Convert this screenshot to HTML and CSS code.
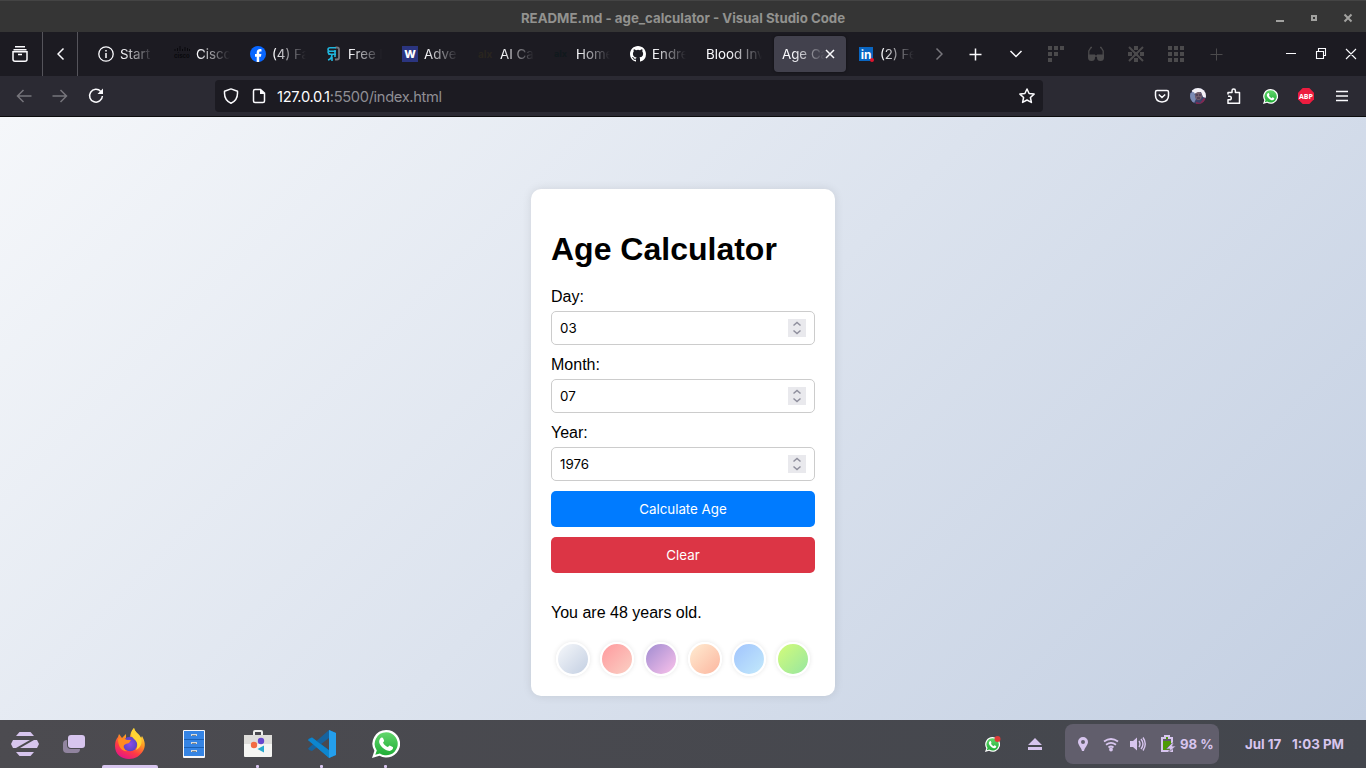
FILE: index.html
```html
<!DOCTYPE html>
<html lang="en">
<head>
<meta charset="utf-8">
<title>Age Calculator</title>
<link rel="stylesheet" href="styles.css">
</head>
<body>
<div class="desktop">
  <header class="titlebar">
    <div class="titlebar-text">README.md - age_calculator - Visual Studio Code</div>
    <svg class="titlebar-controls" width="102" height="32" viewBox="0 0 102 32">
      <path d="M12 20h8v2h-8z" fill="#a2a2a0"/>
      <path d="M48 16h4v4h-4z" fill="none" stroke="#a2a2a0" stroke-width="2"/>
      <path d="M80.500 14.500l7 7M87.500 14.500l-7 7" stroke="#a2a2a0" stroke-width="2"/>
    </svg>
  </header>

  <nav class="tabbar">
    <div class="tab-tool recent">
      <svg width="16" height="16" viewBox="0 0 16 16" class="line"><path d="M3 .8h10M1.500 3.700h13M1 5.700h14v7.500q0 2-2 2H3q-2 0-2-2zM6 8.500h4"/></svg>
    </div>
    <div class="tab-tool scroll-left">
      <svg width="8" height="14" viewBox="0 0 8 14" class="line"><path d="M6.500 1.500L1 7l5.500 5.500"/></svg>
    </div>
    <div class="tabs">
      <div class="tab"><svg class="fav" viewBox="0 0 16 16"><circle cx="8" cy="8" r="7.200" fill="none" stroke="#fbfbfe" stroke-width="1.300"/><path d="M8 7v5M8 4v1.500" stroke="#fbfbfe" stroke-width="1.500"/></svg><span class="tab-label">Start</span></div>
      <div class="tab"><svg class="fav" viewBox="0 0 16 16"><path d="M1 3v2M3.500 2v3M6 0v5M8.500 3v2M11 1v4M13.500 2v3M15.500 3v2" stroke="#09090c"/><text x="0" y="12" class="cisco">cisco</text></svg><span class="tab-label">Cisco</span></div>
      <div class="tab"><svg class="fav" viewBox="0 0 16 16"><circle cx="8" cy="8" r="8" fill="#0866ff"/><path d="M6.700 16v-5.200H5V8h1.700V6.800c0-2.500 1.300-3.700 3.600-3.700l1.200.1v2.300h-1c-1 0-1.300.5-1.300 1.200V8h2.200l-.5 2.800H9.200V16z" fill="#fff"/></svg><span class="tab-label">(4) Fa</span></div>
      <div class="tab"><svg class="fav" viewBox="0 0 16 16"><path d="M9.500 1.500H11q2 0 2 2v8q0 2-2 2H9" fill="none" stroke="#77747a" stroke-width="1.800"/><path d="M10 1.800H4q-2 0-2 1.700t2 1.700h6M2 5.200q0 3 3 3h5M9 4v7M6 8q0 5-4 6M6 11v4M3 8v1" fill="none" stroke="#20b5dc" stroke-width="1.600"/></svg><span class="tab-label">Free D</span></div>
      <div class="tab"><svg class="fav" viewBox="0 0 16 16"><path d="M0 0h16v16H0z" fill="#2b3580"/><text x="8" y="12" class="w-mark">W</text></svg><span class="tab-label">Adve</span></div>
      <div class="tab"><svg class="fav" viewBox="0 0 16 16"><text x="0" y="12" class="alx brown">alx</text></svg><span class="tab-label">AI Ca</span></div>
      <div class="tab"><svg class="fav" viewBox="0 0 16 16"><text x="0" y="11" class="alx small">alx</text></svg><span class="tab-label">Home</span></div>
      <div class="tab"><svg class="fav" viewBox="0 0 16 16"><path fill="#fff" d="M8 0C3.580 0 0 3.580 0 8c0 3.540 2.290 6.530 5.470 7.590.4.070.55-.17.55-.38 0-.19-.01-.82-.01-1.490-2.010.37-2.530-.49-2.690-.94-.09-.23-.48-.94-.82-1.130-.28-.15-.68-.52-.01-.53.63-.01 1.080.58 1.230.82.72 1.210 1.870.87 2.330.66.07-.52.28-.87.51-1.070-1.780-.2-3.640-.89-3.640-3.950 0-.87.31-1.590.82-2.150-.08-.2-.36-1.020.08-2.120 0 0 .67-.21 2.200.82a7.700 7.700 0 0 1 4 0c1.530-1.040 2.200-.82 2.200-.82.44 1.100.16 1.920.08 2.120.51.56.82 1.270.82 2.150 0 3.070-1.870 3.750-3.650 3.950.29.25.54.73.54 1.480 0 1.070-.01 1.930-.01 2.200 0 .21.15.46.55.38A8.010 8.010 0 0 0 16 8c0-4.420-3.580-8-8-8z"/></svg><span class="tab-label">Endre</span></div>
      <div class="tab"><span class="tab-label">Blood Inv</span></div>
      <div class="tab active"><span class="tab-label">Age Ca</span><svg class="tab-close line" width="10" height="10" viewBox="0 0 10 10"><path d="M1 1l8 8M9 1L1 9"/></svg></div>
      <div class="tab"><svg class="fav" viewBox="0 0 16 16"><path d="M1 1h14v14H1z" fill="#0a66c2"/><text x="8" y="13" class="in-mark">in</text><circle cx="14" cy="14" r="2" fill="#e0132c"/></svg><span class="tab-label">(2) Fe</span></div>
    </div>
    <div class="tab-actions">
      <div class="cell30"><svg width="8" height="14" viewBox="0 0 8 14" class="line faint"><path d="M1.500 1.500L7 7l-5.500 5.500"/></svg></div>
      <div class="cell42"><svg width="13" height="13" viewBox="0 0 13 13" class="line"><path d="M6.500 .5v12M.5 6.500h12"/></svg></div>
      <div class="cell40"><svg width="14" height="8" viewBox="0 0 14 8" class="line"><path d="M1.500 1L7 6.500 12.500 1"/></svg></div>
      <div class="cell40"><svg width="16" height="16" viewBox="0 0 16 16" fill="#4b4a4c"><path d="M0 0h4v4H0zM6 0h4v4H6zM12 0h4v4h-4zM0 6h4v4H0zM6 6h4v4H6zM0 12h4v4H0z"/></svg></div>
      <div class="cell40"><svg width="16" height="16" viewBox="0 0 16 16" fill="#4b4a4c"><path d="M4 1.500H3L.8 5v6M12 1.500h1L15.200 5v6M6 10h4" fill="none" stroke="#4b4a4c" stroke-width="1.300"/><path d="M0 8.500h7v3q0 3.500-3.500 3.500T0 11.500zM9 8.500h7v3q0 3.500-3.500 3.500T9 11.500z"/></svg></div>
      <div class="cell40"><svg width="16" height="16" viewBox="0 0 16 16" fill="#4b4a4c"><path d="M6 0h4v4H6zM0 6h4v4H0zM6 6h4v4H6zM12 6h4v4h-4zM6 12h4v4H6z"/><path d="M1 1l14 14M15 1L1 15" stroke="#4b4a4c" stroke-width="2"/></svg></div>
      <div class="cell40"><svg width="16" height="16" viewBox="0 0 16 16" fill="#4b4a4c"><path d="M0 0h4v4H0zM6 0h4v4H6zM12 0h4v4h-4zM0 6h4v4H0zM6 6h4v4H6zM12 6h4v4h-4zM0 12h4v4H0zM6 12h4v4H6zM12 12h4v4h-4z"/></svg></div>
      <div class="cell40"><svg width="13" height="13" viewBox="0 0 13 13" stroke="#4b4a4c" fill="none"><path d="M6.500 .5v12M.5 6.500h12"/></svg></div>
    </div>
    <svg class="window-controls" width="90" height="44" viewBox="0 0 90 44" fill="none" stroke="#fbfbfe"><path d="M10 21.500h10M40.500 19.500h7v7h-7zM42.500 19v-2.500h7v7H47.500M70 17l10 10M80 17L70 27" stroke-width="1.100"/></svg>
  </nav>

  <div class="navbar">
    <div class="nav-buttons">
      <svg width="16" height="14" viewBox="0 0 16 14" class="line dim"><path d="M15.500 7H1.500M7.500 1l-6 6 6 6"/></svg>
      <svg width="16" height="14" viewBox="0 0 16 14" class="line dim"><path d="M.5 7h14M8.500 1l6 6-6 6"/></svg>
      <svg width="16" height="16" viewBox="0 0 16 16" class="line"><path d="M12.800 3.500A6.400 6.400 0 1 0 14.400 8"/><path d="M15 .5v5.500H9.500z" fill="#fbfbfe" stroke="none"/></svg>
    </div>
    <div class="urlbar">
      <svg width="16" height="16" viewBox="0 0 16 16" class="line"><path d="M8 .9l6.500 2.400v2C14.500 10 12 13.500 8 15.300 4 13.500 1.500 10 1.500 5.300v-2z" stroke-linejoin="round"/></svg>
      <svg width="14" height="16" viewBox="0 0 14 16" class="line"><path d="M8.500 1.600H3q-1.500 0-1.500 1.500v10q0 1.500 1.500 1.500h8q1.500 0 1.500-1.500V5z"/><path d="M8 1l5 5H8z" fill="#fbfbfe" stroke="none"/></svg>
      <div class="url"><span class="host">127.0.0.1</span>:5500/index.html</div>
      <svg width="16" height="16" viewBox="0 0 16 16" class="line"><path stroke-linejoin="round" d="M8 1l2.100 4.500 5 .6-3.700 3.400 1 4.900L8 12l-4.400 2.400 1-4.900L.9 6.100l5-.6z"/></svg>
    </div>
    <div class="extensions">
      <div><svg width="16" height="14" viewBox="0 0 16 14" class="line"><path d="M3 1.500h10q1.500 0 1.500 1.500v3.500q0 6-6.500 6.500-6.500-.5-6.500-6.500V3Q1.500 1.500 3 1.500zM4.800 5.500L8 8.500l3.200-3"/></svg></div>
      <div><svg width="16" height="16" viewBox="0 0 16 16"><defs><clipPath id="avatar"><circle cx="8" cy="8" r="8"/></clipPath></defs><g clip-path="url(#avatar)"><path d="M0 0h16v16H0z" fill="#3c4169"/><path d="M1 0h15v10l-3-1-2-5-4 1-4 1z" fill="#f3f1f6"/><path d="M0 5l4-1 2 7-2 4-4-2z" fill="#7b8bb4"/><ellipse cx="8.500" cy="8" rx="3.300" ry="4" fill="#75606d"/><path d="M6 14l4 1 4-5 2 2v5H6z" fill="#852850"/><path d="M6 7h2M9 7h2M7 10h3" stroke="#342b48"/></g></svg></div>
      <div><svg width="16" height="16" viewBox="0 0 16 16" class="line"><path stroke-linejoin="round" d="M2 6.500V4.500h4V2.800a1.700 1.700 0 0 1 3.400 0v1.700h4.100v10.800H2v-3.500h1.500a1.800 1.800 0 0 0 0-3.600H2"/></svg></div>
      <div><svg width="15" height="15" viewBox="0 0 28 28"><use href="#whatsapp"/></svg></div>
      <div><svg width="16" height="16" viewBox="0 0 16 16"><path d="M4.700 0h6.600L16 4.700v6.600L11.300 16H4.700L0 11.300V4.700z" fill="#ed1c3f"/><text x="8" y="10.900" class="abp" textLength="14" lengthAdjust="spacingAndGlyphs">ABP</text></svg></div>
      <div><svg width="12" height="12" viewBox="0 0 12 12" class="line"><path d="M0 1.500h12M0 6h12M0 10.500h12"/></svg></div>
    </div>
  </div>

  <main class="page">
    <section class="card">
      <h1>Age Calculator</h1>
      <div class="field"><label>Day:</label><div class="input"><span>03</span><svg class="spin" viewBox="0 0 18 18"><path d="M5.500 6.500L9 3.500l3.500 3M5.500 11.500l3.500 3 3.500-3"/></svg></div></div>
      <div class="field"><label>Month:</label><div class="input"><span>07</span><svg class="spin" viewBox="0 0 18 18"><path d="M5.500 6.500L9 3.500l3.500 3M5.500 11.500l3.500 3 3.500-3"/></svg></div></div>
      <div class="field"><label>Year:</label><div class="input"><span>1976</span><svg class="spin" viewBox="0 0 18 18"><path d="M5.500 6.500L9 3.500l3.500 3M5.500 11.500l3.500 3 3.500-3"/></svg></div></div>
      <button class="btn">Calculate Age</button>
      <button class="btn clear">Clear</button>
      <p class="result">You are 48 years old.</p>
      <div class="palette">
        <span class="swatch mist"></span><span class="swatch coral"></span><span class="swatch violet"></span><span class="swatch peach"></span><span class="swatch sky"></span><span class="swatch lime"></span>
      </div>
    </section>
  </main>

  <footer class="taskbar">
    <div class="launcher start"><svg width="28" height="26" viewBox="0 0 28 26" fill="#d7c5ee"><path d="M5 5l3.500-4h11L23 5zM2 9h17L5 17H2l-2-4zM26 17H9l14-8h3l2 4zM5 21h18l-3.500 4h-11z"/></svg></div>
    <div class="launcher views"><svg width="24" height="20" viewBox="0 0 24 20"><rect x="1" y="6" width="17" height="13" rx="4" fill="#91849f"/><rect x="5" y="0" width="19" height="15" rx="4" fill="#4b4a50"/><rect x="6" y="1" width="17" height="13" rx="3" fill="#d7c5ee"/></svg></div>
    <div class="launcher focused">
      <svg width="32" height="32" viewBox="0 0 32 32"><defs><linearGradient id="fire" x1=".8" y1="0" x2=".3" y2="1"><stop offset="0" stop-color="#fff34a"/><stop offset=".4" stop-color="#ff9a22"/><stop offset=".7" stop-color="#ff3b43"/><stop offset="1" stop-color="#e31587"/></linearGradient><radialGradient id="globe"><stop offset="0" stop-color="#8b4bea"/><stop offset="1" stop-color="#5a45c4"/></radialGradient></defs><path d="M20 0c1 5 5 6 7 10l1-2c3 5 4 10 1 15-3 5-8 8-14 8C7 31 1 26 1 18c0-4 1-7 3-9l1-3 3 4 4-4v4l4 1c0-5 1-8 4-11z" fill="url(#fire)"/><circle cx="16" cy="16" r="7.300" fill="url(#globe)"/><path d="M4 11c3-2 6-1 9 1h4l-2 3c-4 1-6 2-5 5 1 2 2 3 4 3-6 1-10-4-10-12z" fill="#ff8b22"/><path d="M20 0c-3 4-4 7 0 11 4 3 4 7 2 11 6-3 7-9 4-14-2-3-5-4-6-8z" fill="#ffd534"/></svg>
      <span class="indicator"></span>
    </div>
    <div class="launcher"><svg width="22" height="28" viewBox="0 0 22 28"><rect width="22" height="28" rx="1" fill="#f7f7f9"/><path d="M1 1h20v25H1z" fill="#3584e4"/><path d="M1 9.500h20M1 17.500h20" stroke="#1c61b4"/><path d="M8 4h6v2H8zM8 12h6v2H8zM8 20h6v2H8z" fill="#d5d9dc"/><path d="M9 5.500h4M9 13.500h4M9 21.500h4" stroke="#77838c"/></svg></div>
    <div class="launcher"><svg width="28" height="28" viewBox="0 0 28 28"><path d="M10 6V2q0-1 1-1h6q1 0 1 1v4" fill="none" stroke="#eeeeec" stroke-width="2"/><rect y="5" width="28" height="22" rx="1" fill="#f5f5f3"/><path d="M0 5h28v9H0z" fill="#deddda"/><circle cx="17" cy="11" r="3.200" fill="#6747ce"/><circle cx="10" cy="15" r="3.200" fill="#f36c42"/><path d="M13.500 19l6.500-3.500v7z" fill="#28a9ce"/></svg><span class="dot"></span></div>
    <div class="launcher"><svg width="28" height="28" viewBox="0 0 28 28"><path d="M21 0l7 3v22l-7 3V20L4 7.500 1 8.500 0 10l21 17.500V28z" fill="#0877bd"/><path d="M0 18.500L21 0v8L4 21 1 20z" fill="#16639e"/><path d="M21 0l7 3v22l-7 3z" fill="#249fed"/><path d="M4 7.500l17 13V28L0 10z" fill="#0d86cf"/></svg><span class="dot"></span></div>
    <div class="launcher"><svg width="28" height="28" viewBox="0 0 28 28"><defs><linearGradient id="wa-green" x2="0" y2="1"><stop stop-color="#62d66b"/><stop offset="1" stop-color="#20ae37"/></linearGradient><g id="whatsapp"><path d="M14.200 0A13.700 13.700 0 0 0 2.400 20.800L0 28l7.500-2.200A13.800 13.800 0 1 0 14.200 0z" fill="#fff"/><path d="M14.200 2.300A11.500 11.500 0 0 0 4.800 20.400L3.300 24.800l4.600-1.400A11.500 11.500 0 1 0 14.200 2.300z" fill="url(#wa-green)"/><path d="M9.500 7.500c.7-.3 1.300 0 1.600.7l1 2.400c.3.800-1.200 1.800-1 2.200 1 2 2.500 3.400 4.600 4.300.5.200 1.500-1.800 2-1.600l3 1.400c.5.300.3 1.500 0 2.200-.8 1.500-2.800 2.100-4.500 1.700-4.300-1-8.200-4.800-9-8.500-.3-1.800.7-4 2.300-4.800z" fill="#fff"/></g></defs><use href="#whatsapp"/></svg><span class="dot"></span></div>

    <div class="status">
      <svg width="18" height="16" viewBox="0 0 18 16"><svg y="1" width="15" height="15" viewBox="0 0 28 28"><use href="#whatsapp"/></svg><circle cx="12.500" cy="3" r="3" fill="#dc3c38"/></svg>
      <svg class="eject" width="16" height="14" viewBox="0 0 16 14" fill="#d7c5ee"><path d="M8 1l7 7H1zM1 10h14v3H1z"/></svg>
      <div class="tray">
        <svg width="12" height="16" viewBox="0 0 12 16" fill="#d7c5ee"><path fill-rule="evenodd" d="M6 1a5 5 0 0 1 5 5c0 3-3 5-4 9H5C4 11 1 9 1 6a5 5 0 0 1 5-5zm0 3a2 2 0 1 0 0 4 2 2 0 0 0 0-4z"/></svg>
        <svg width="16" height="16" viewBox="0 0 16 16" fill="none" stroke="#d7c5ee" stroke-width="1.800"><path d="M1 5.500q7-5 14 0M3 8.700q5-3.500 10 0"/><path d="M5.500 11.500q2.500-2 5 0"/><circle cx="8" cy="13.500" r="1" fill="#d7c5ee"/></svg>
        <svg width="16" height="16" viewBox="0 0 16 16"><path d="M0 5h3l4-3.500v13L3 11H0z" fill="#d7c5ee"/><path d="M9 5q2 3 0 6M11 3q4 5 0 10M13 1.500q4.500 6.500 0 13" fill="none" stroke="#d7c5ee" stroke-width="1.400"/></svg>
        <svg width="16" height="18" viewBox="0 0 16 18"><path d="M5 3V1h4v2h3v13H2V3z" fill="#4e9a06" stroke="#d7c5ee" stroke-width="2"/><path d="M3 4h8v2H3z" fill="#615c6c"/><path d="M12 8l-6 6h4l-2 4 8-7h-4l2-3z" fill="#d7c5ee" stroke="#615e6c" stroke-width=".7"/></svg>
        <span class="battery">98 %</span>
      </div>
      <div class="clock"><span>Jul 17</span><span>1:03 PM</span></div>
    </div>
  </footer>
</div>
</body>
</html>
```

FILE: styles.css
```css
* { box-sizing: border-box; }
body { margin: 0; overflow: hidden; font-family: Inter, sans-serif; font-size: 13.333px; color: #fbfbfe; }
svg { display: block; flex: none; }
.desktop { width: 1366px; height: 768px; display: flex; flex-direction: column; }
.line { fill: none; stroke: #fbfbfe; stroke-width: 1.5; }
.dim { stroke: #76757c; }
.faint { stroke: #77767c; }

.titlebar { height: 32px; background: #353535; border-top: 1px solid #444; display: grid; grid-template-columns: 102px 1fr 102px; align-items: center; }
.titlebar-text { grid-column: 2; text-align: center; font-size: 13.25px; font-weight: 700; color: #92928f; padding-top: 3px; }
.titlebar-controls { margin-top: -1px; }

.tabbar { height: 44px; background: #1c1b22; display: flex; align-items: center; }
.tab-tool { height: 44px; display: flex; align-items: center; justify-content: center; border-right: 1px solid #55545b; }
.recent { width: 43px; padding-right: 3px; }
.scroll-left { width: 35px; padding-left: 2px; }
.tabs { display: flex; margin-left: 10px; }
.tab { width: 72px; height: 36px; margin: 0 2px; padding: 0 8px; display: flex; align-items: center; gap: 6px; border-radius: 4px; }
.tab.active { background: #42414d; gap: 0; padding-right: 11px; box-shadow: 0 0 3px rgba(0, 0, 0, .5); }
.fav { width: 16px; height: 16px; }
.tab-label { flex: 1; min-width: 0; overflow: hidden; white-space: nowrap; line-height: 20px; -webkit-mask-image: linear-gradient(to left, transparent, #000 32px); mask-image: linear-gradient(to left, transparent, #000 32px); }
.cisco { font: 700 6px Inter, sans-serif; fill: #09090c; }
.w-mark { font: 800 11px Inter, sans-serif; fill: #fff; text-anchor: middle; }
.alx { font: 700 9px Inter, sans-serif; fill: #10191d; }
.alx.brown { font-size: 10px; fill: #29251f; }
.in-mark { font: 700 12px Inter, sans-serif; fill: #fff; text-anchor: middle; }
.abp { font: 700 7.5px "Open Sans", sans-serif; fill: #fff; text-anchor: middle; }
.tab-actions { display: flex; align-items: center; }
.tab-actions > div { display: flex; justify-content: center; }
.cell30 { width: 30px; }
.cell42 { width: 42px; }
.cell40 { width: 40px; }
.window-controls { margin-left: auto; }

.navbar { height: 41px; background: #2b2a33; border-bottom: 1px solid #0c0c0d; display: flex; align-items: center; }
.nav-buttons { width: 215px; padding-left: 16px; display: flex; align-items: center; gap: 20px; }
.urlbar { width: 828px; height: 32px; padding: 0 8px; border-radius: 4px; background: #1c1b22; display: flex; align-items: center; gap: 13px; }
.url { flex: 1; margin-left: -2px; padding-top: 1px; font-size: 14.667px; letter-spacing: -.33px; color: #8f8e94; line-height: 22px; }
.host { color: #fbfbfe; }
.extensions { margin-left: 101px; display: flex; }
.extensions > div { width: 36px; height: 16px; display: flex; align-items: center; justify-content: center; }

.page { flex: 1; background: linear-gradient(135deg, #f5f7fa, #c3cfe2); display: flex; justify-content: center; align-items: flex-start; padding-top: 72px; }
.card { width: 304px; height: 507px; padding: 20px; border-radius: 10px; background: #fff; box-shadow: 0 0 10px rgba(0, 0, 0, .1); color: #000; font-family: "Liberation Sans", Arial, sans-serif; font-size: 16px; display: flex; flex-direction: column; }
h1 { font-size: 32px; line-height: 37px; margin: 22px 0 19px; }
.field { height: 68px; padding-bottom: 10px; display: flex; flex-direction: column; justify-content: space-between; }
.field label { line-height: 20px; }
.input { height: 34px; border: 1px solid #ccc; border-radius: 5px; padding: 0 8px; display: flex; align-items: center; justify-content: space-between; font: 13.333px Inter, sans-serif; }
.spin { width: 18px; height: 18px; background: #e9e9ed; fill: none; stroke: #8f8f9d; stroke-width: 1.5; }
.btn { height: 36px; margin: 0 0 10px; border: 0; border-radius: 5px; background: #007bff; color: #fff; font: 13.333px Inter, sans-serif; }
.btn.clear { background: #dc3545; }
.result { margin: 21px 0 20px; line-height: 18px; }
.palette { display: flex; justify-content: space-around; margin-top: auto; }
.swatch { width: 34px; height: 34px; border: 2px solid #fff; border-radius: 50%; box-shadow: 0 0 5px rgba(0, 0, 0, .1); }
.mist { background: linear-gradient(135deg, #f5f7fa, #c3cfe2); }
.coral { background: linear-gradient(135deg, #ff9a9e, #fad0c4); }
.violet { background: linear-gradient(135deg, #a18cd1, #fbc2eb); }
.peach { background: linear-gradient(135deg, #ffecd2, #fcb69f); }
.sky { background: linear-gradient(135deg, #a1c4fd, #c2e9fb); }
.lime { background: linear-gradient(135deg, #d4fc79, #96e6a1); }

.taskbar { height: 48px; background: linear-gradient(100deg, #4c4b50, #43464d); display: flex; align-items: center; color: #d7c5ee; }
.launcher { position: relative; width: 64px; height: 48px; display: flex; align-items: center; justify-content: center; }
.start { width: 50px; }
.views { width: 48px; }
.indicator { position: absolute; left: 4px; bottom: 0; width: 56px; height: 3px; background: #d7c5ee; border-radius: 2px 2px 0 0; }
.dot { position: absolute; left: 30px; bottom: 0; width: 3px; height: 3px; border-radius: 1px; background: #d7c5ee; }
.status { margin-left: auto; margin-right: 22px; display: flex; align-items: center; font-weight: 700; }
.eject { margin: 0 22px 0 24px; }
.tray { width: 154px; height: 40px; border-radius: 8px; background: #615e6c; padding-left: 12px; display: flex; align-items: center; }
.tray svg:nth-child(2) { margin-left: 14px; }
.tray svg:nth-child(3) { margin-left: 11px; }
.tray svg:nth-child(4) { margin-left: 14px; }
.battery { margin-left: 4px; font-size: 13.2px; white-space: nowrap; }
.clock { width: 99px; display: flex; justify-content: space-between; margin-left: 26px; white-space: nowrap; }
```
